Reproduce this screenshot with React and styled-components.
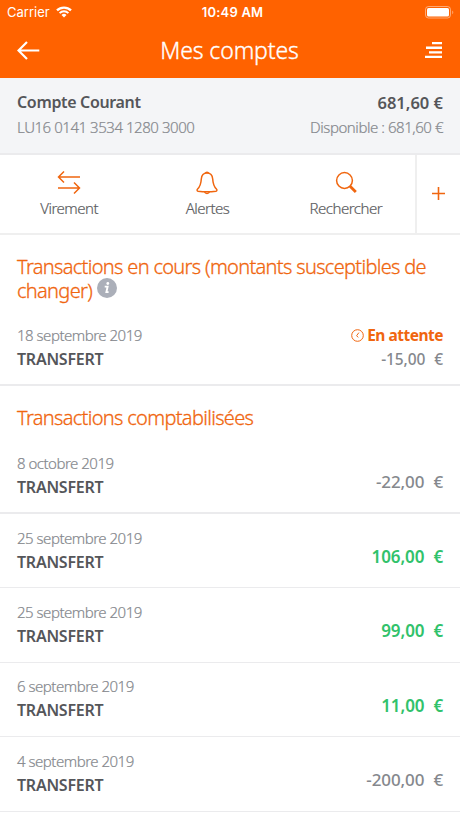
import React from "react";
import styled, { createGlobalStyle } from "styled-components";

const pending = [
  { date: "18 septembre 2019", label: "TRANSFERT", amount: "-15,00" },
];

const booked = [
  { date: "8 octobre 2019", label: "TRANSFERT", amount: "-22,00" },
  { date: "25 septembre 2019", label: "TRANSFERT", amount: "106,00" },
  { date: "25 septembre 2019", label: "TRANSFERT", amount: "99,00" },
  { date: "6 septembre 2019", label: "TRANSFERT", amount: "11,00" },
  { date: "4 septembre 2019", label: "TRANSFERT", amount: "-200,00" },
];

export default function App() {
  return (
    <Screen>
      <GlobalStyle />
      <StatusBar>
        <Carrier>
          Carrier <WifiIcon />
        </Carrier>
        <Clock>10:49 AM</Clock>
        <BatteryIcon />
      </StatusBar>
      <Header>
        <BackIcon />
        <PageTitle>Mes comptes</PageTitle>
        <MenuIcon />
      </Header>

      <Account>
        <AccountLine $strong>
          <span>Compte Courant</span>
          <Balance>681,60 €</Balance>
        </AccountLine>
        <AccountLine>
          <span>LU16 0141 3534 1280 3000</span>
          <span>Disponible : 681,60 €</span>
        </AccountLine>
      </Account>

      <Actions>
        <Action>
          <TransferIcon />
          Virement
        </Action>
        <Action>
          <BellIcon />
          Alertes
        </Action>
        <Action>
          <SearchIcon />
          Rechercher
        </Action>
        <MoreAction>
          <PlusIcon />
        </MoreAction>
      </Actions>

      <SectionTitle>
        Transactions en cours (montants susceptibles de changer) <InfoIcon />
      </SectionTitle>
      {pending.map((item) => (
        <Transaction key={item.date} {...item} pending />
      ))}

      <SectionTitle $second>Transactions comptabilisées</SectionTitle>
      {booked.map((item, i) => (
        <Transaction key={i} {...item} thick={i === 0} />
      ))}
    </Screen>
  );
}

function Transaction({ date, label, amount, pending, thick }) {
  return (
    <Row $thick={thick} $pending={pending}>
      <div>
        <RowDate>{date}</RowDate>
        <RowLabel>{label}</RowLabel>
      </div>
      <RowRight $pending={pending}>
        {pending && (
          <Status>
            <ClockIcon />
            En attente
          </Status>
        )}
        <Amount $positive={!amount.startsWith("-")} $small={pending}>
          {amount}
          <span>€</span>
        </Amount>
      </RowRight>
    </Row>
  );
}

const WifiIcon = () => (
  <svg width="16" height="12" viewBox="0 0 16 12" fill="none" stroke="#fff">
    <path d="M1 4.4a10 10 0 0 1 14 0" strokeWidth="2.3" />
    <path d="M3.6 7.1a6.3 6.3 0 0 1 8.8 0" strokeWidth="2" />
    <path d="M8 11.4L5.5 9a3.6 3.6 0 0 1 5 0z" fill="#fff" stroke="none" />
  </svg>
);

const BatteryIcon = () => (
  <svg width="29" height="13" viewBox="0 0 29 13">
    <rect x="0.5" y="0.5" width="25" height="11.5" rx="3" fill="none" stroke="#fff" strokeOpacity="0.45" />
    <rect x="2" y="2" width="22" height="8.5" rx="1.6" fill="#fff" />
    <path d="M27.3 4.4c1.3.5 1.3 3.2 0 3.8z" fill="#fff" fillOpacity="0.5" />
  </svg>
);

const BackIcon = () => (
  <svg width="23" height="19" viewBox="0 0 23 19" fill="none" stroke="#fff" strokeWidth="2.2">
    <path d="M22.3 9.5H1.5M10 1L1.5 9.5l8.5 8.5" />
  </svg>
);

const MenuIcon = () => (
  <svg width="17" height="16" viewBox="0 0 17 16" fill="#fff">
    <path d="M7 0h10v2.3H7zM1 4.6h16v2.3H1zM4 9.2h13v2.3H4zM0 13.7h17V16H0z" />
  </svg>
);

const TransferIcon = () => (
  <svg width="24" height="24" viewBox="0 0 24 24" fill="none" stroke="#f0660f" strokeWidth="1.5">
    <path d="M23 6H1.5M7 .5L1.5 6 7 11.5M1 17h21.5M17 11.5l5.5 5.5-5.5 5.5" />
  </svg>
);

const BellIcon = () => (
  <svg width="24" height="24" viewBox="0 0 24 24" fill="none" stroke="#f0660f" strokeWidth="1.5">
    <path d="M10.3 2.2a1.8 1.6 0 0 1 3.4 0" />
    <path d="M12 2C8.5 2 6.6 4.2 6.3 8c-.3 5-1.2 7.6-3.7 10-.9.9-.6 2 .5 2.2 5.6.8 12.2.8 17.8 0 1.1-.2 1.4-1.3.5-2.2-2.5-2.4-3.4-5-3.700-10C17.4 4.2 15.5 2 12 2z" />
    <path d="M9.6 21.1c.7 1.8 4.1 1.8 4.8 0" />
  </svg>
);

const SearchIcon = () => (
  <svg width="24" height="24" viewBox="0 0 24 24" fill="none" stroke="#f0660f">
    <circle cx="10.5" cy="9.5" r="7.9" strokeWidth="1.5" />
    <path d="M15.8 15l6 6" strokeWidth="2.8" />
  </svg>
);

const PlusIcon = () => (
  <svg width="13" height="13" viewBox="0 0 13 13" stroke="#f0660f" strokeWidth="1.6">
    <path d="M6.5 0v13M0 6.5h13" />
  </svg>
);

const InfoIcon = () => (
  <InfoSvg width="20" height="20" viewBox="0 0 20 20">
    <circle cx="10" cy="10" r="10" fill="#abafb9" />
    <circle cx="10.8" cy="5.5" r="1.4" fill="#fff" />
    <path d="M7.7 8.6h2.9l-1.2 5.5h2.2" stroke="#fff" strokeWidth="1.9" fill="none" />
  </InfoSvg>
);

const ClockIcon = () => (
  <svg width="13" height="13" viewBox="0 0 13 13" fill="none" stroke="#f0660f" strokeWidth="1">
    <circle cx="6.5" cy="6.5" r="5.8" />
    <path d="M7.9 3.6L5.6 6.7l1.6 1.7" />
  </svg>
);

const GlobalStyle = createGlobalStyle`
  * {
    box-sizing: border-box;
  }

  body {
    margin: 0;
    background: #fff;
  }
`;

const Screen = styled.main`
  width: 460px;
  height: 818px;
  overflow: hidden;
  background: #fff;
  color: #55565a;
  font-family: "Noto Sans", sans-serif;
  font-size: 15px;
  font-weight: 300;

  svg {
    display: block;
    flex: none;
  }
`;

const StatusBar = styled.div`
  height: 24px;
  padding: 0 6px 0 7px;
  display: grid;
  grid-template-columns: 1fr auto 1fr;
  align-items: center;
  background: #ff6200;
  color: #fff;
  font-family: Inter, sans-serif;
  font-size: 13px;

  > svg {
    justify-self: end;
  }
`;

const Carrier = styled.div`
  display: flex;
  gap: 6px;
  align-items: center;
  font-weight: 400;
`;

const Clock = styled.div`
  padding-left: 4px;
  font-weight: 600;
  letter-spacing: 0.2px;
`;

const Header = styled.header`
  height: 54px;
  padding: 0 18px 2px 17px;
  display: grid;
  grid-template-columns: 1fr auto 1fr;
  align-items: center;
  background: #ff6200;
  color: #fff;

  > svg:last-child {
    justify-self: end;
  }
`;

const PageTitle = styled.h1`
  margin: 0;
  font-size: 23px;
  font-weight: 300;
  line-height: 30px;
  letter-spacing: -0.1px;
  -webkit-text-stroke: 0.35px;
`;

const Account = styled.section`
  height: 77px;
  padding: 12px 17px 0;
  background: #f4f5f7;
  border-bottom: 2px solid #ebebed;
`;

const AccountLine = styled.div`
  display: flex;
  justify-content: space-between;
  line-height: 25px;
  font-size: ${(p) => (p.$strong ? "16px" : "15px")};
  font-weight: ${(p) => (p.$strong ? 600 : 300)};
  letter-spacing: ${(p) => (p.$strong ? "-0.35px" : "-0.45px")};
  color: ${(p) => (p.$strong ? "#55565a" : "#85888d")};
  -webkit-text-stroke: ${(p) => (p.$strong ? "0" : "0.2px")};
`;

const Balance = styled.span`
  font-size: 16.5px;
  letter-spacing: 0;
`;

const Actions = styled.nav`
  height: 80px;
  display: grid;
  grid-template-columns: repeat(3, 1fr) 45px;
  border-bottom: 2px solid #efefef;
`;

const Action = styled.div`
  padding-top: 16px;
  display: flex;
  flex-direction: column;
  align-items: center;
  line-height: 26px;
  letter-spacing: -0.5px;
  color: #5c5d61;
  -webkit-text-stroke: 0.2px;
`;

const MoreAction = styled.div`
  padding-bottom: 2px;
  display: flex;
  align-items: center;
  justify-content: center;
  border-left: 2px solid #efefef;
`;

const SectionTitle = styled.h2`
  margin: 0;
  padding: ${(p) => (p.$second ? "20px 17px 11px" : "20px 17px 19px")};
  color: #f0660f;
  font-size: 20px;
  font-weight: 300;
  line-height: 23px;
  letter-spacing: -0.68px;
  -webkit-text-stroke: 0.3px;
`;

const InfoSvg = styled.svg`
  && {
    display: inline-block;
    vertical-align: 1px;
    margin-bottom: -1px;
  }
`;

const Row = styled.article`
  height: ${(p) => (p.$pending ? "65px" : p.$thick ? "74px" : "74.4px")};
  padding: ${(p) => (p.$pending ? "2px" : p.$thick ? "10.5px" : "11.5px")} 17px 0;
  display: flex;
  justify-content: space-between;
  border-bottom: ${(p) => (p.$thick || p.$pending ? 2 : 1)}px solid #ebebed;
`;

const RowDate = styled.div`
  line-height: 24px;
  letter-spacing: -0.49px;
  color: #85888d;
  -webkit-text-stroke: 0.2px;
`;

const RowLabel = styled.div`
  font-size: 16px;
  line-height: 24px;
  font-weight: 600;
  letter-spacing: -0.25px;
`;

const RowRight = styled.div`
  display: flex;
  flex-direction: column;
  align-items: flex-end;
  padding-top: ${(p) => (p.$pending ? 0 : "19.5px")};
`;

const Status = styled.div`
  display: flex;
  align-items: center;
  gap: 3px;
  color: #f0660f;
  font-size: 15.5px;
  font-weight: 700;
  line-height: 24px;
  letter-spacing: -0.5px;
`;

const Amount = styled.div`
  display: flex;
  gap: 9px;
  font-size: ${(p) => (p.$small ? "15.5px" : "17px")};
  line-height: 24px;
  font-weight: ${(p) => (p.$positive ? 600 : 500)};
  letter-spacing: -0.1px;
  color: ${(p) => (p.$positive ? "#31c26b" : "#85888d")};
`;
